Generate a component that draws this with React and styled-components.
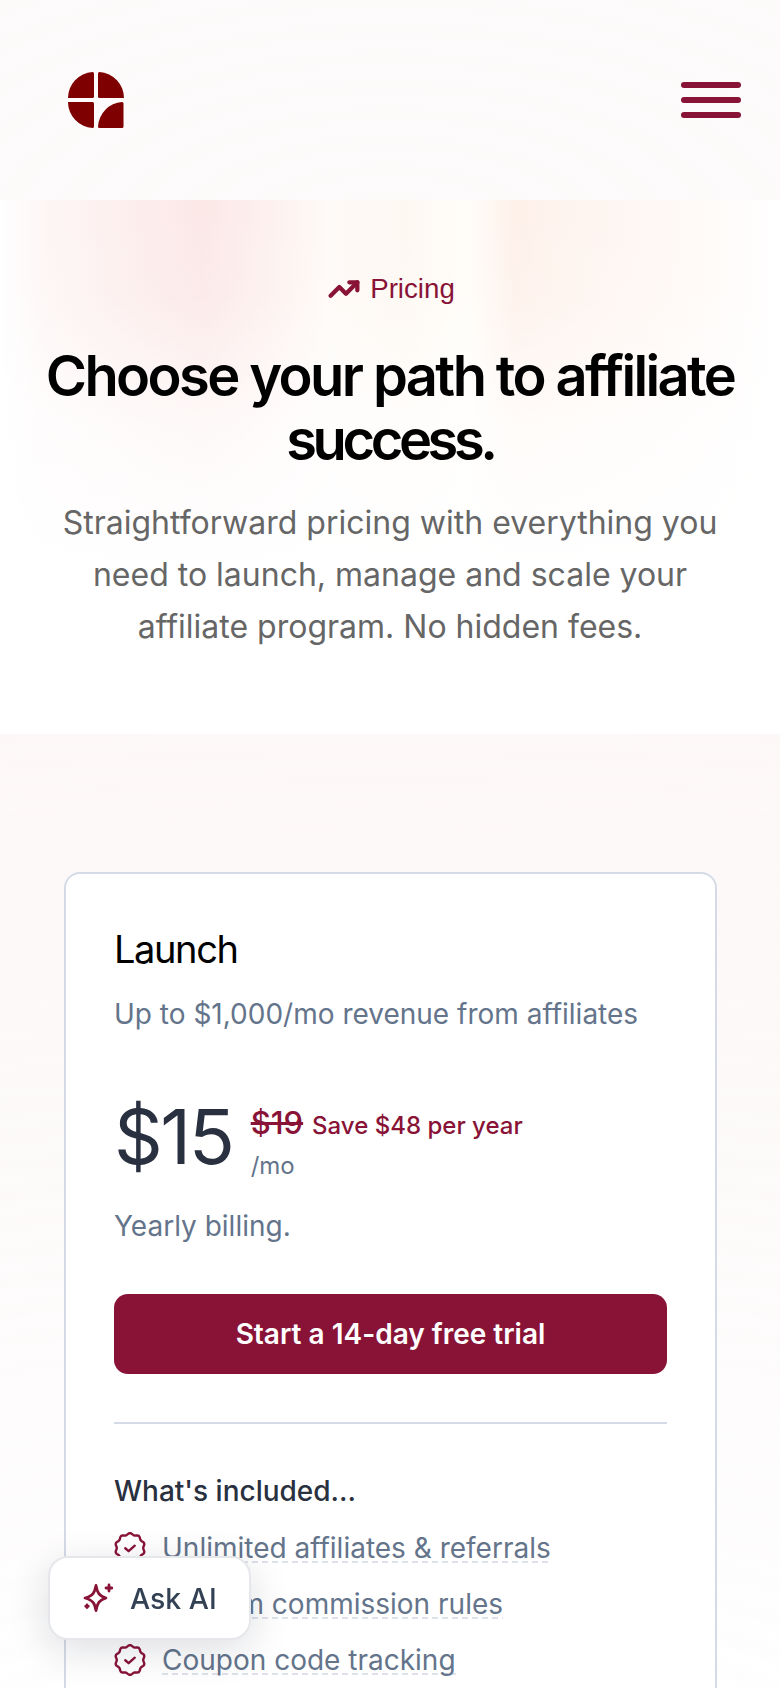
import styled, { createGlobalStyle } from 'styled-components';
import { TrendingUp } from 'lucide-react';

const Global = createGlobalStyle`
  html, body { margin: 0; padding: 0; background: #fff; }
  body { font-family: Inter, "Liberation Sans", sans-serif; }
`;

const Page = styled.div`
  height: 100vh;
  overflow: hidden;
  position: relative;
`;

const waves = `repeating-radial-gradient(ellipse 900px 420px at 50% 120%, rgba(240,225,225,0) 0, rgba(240,225,225,0.05) 30px, rgba(240,225,225,0) 60px)`;

const Nav = styled.header`
  height: 200px;
  box-sizing: border-box;
  display: flex;
  align-items: center;
  justify-content: space-between;
  padding: 0 39px 0 68px;
  background: ${waves}, #fdfbfb;
`;

const Burger = styled.button`
  display: flex;
  flex-direction: column;
  gap: 9px;
  width: 60px;
  padding: 0;
  border: 0;
  background: none;
  & > span {
    display: block;
    height: 6px;
    border-radius: 3px;
    background: #881337;
  }
`;

const Hero = styled.section`
  height: 534px;
  box-sizing: border-box;
  padding-top: 71px;
  text-align: center;
  background:
    linear-gradient(180deg, rgba(255,255,255,0) 0%, rgba(255,255,255,0.1) 18%, rgba(255,255,255,0.72) 42%, #fff 70%),
    linear-gradient(90deg, #fff 0%, #fdf6f5 6%, #fcedec 18%, #fbe8e7 26%, #fdf0ee 34%, #fefaf7 42%, #fef8f2 52%, #fffdf9 60%, #fef1ea 66%, #fef5f0 76%, #fffaf8 90%, #fff 100%);
`;

const Eyebrow = styled.div`
  display: flex;
  align-items: center;
  justify-content: center;
  gap: 10px;
  height: 36px;
  padding-left: 3px;
  font-family: "Liberation Sans", Arial, sans-serif;
  font-size: 27.7px;
  color: #881337;
`;

const Title = styled.h1`
  margin: 37px 0 0;
  font-size: 56px;
  line-height: 64px;
  font-weight: 600;
  letter-spacing: -2.6px;
  color: #000;
`;

const TightWord = styled.span`
  letter-spacing: -4.4px;
`;

const Lead = styled.p`
  margin: 25px auto 0;
  width: 680px;
  font-size: 32px;
  line-height: 52px;
  color: #666;
`;

const Plans = styled.section`
  padding: 138px 63px 0 64px;
  height: 960px;
  box-sizing: border-box;
  background: ${waves}, linear-gradient(180deg, #fdf9f8 0%, #fdfafa 40%, #fff 100%);
`;

const Card = styled.article`
  box-sizing: border-box;
  height: 1100px;
  padding: 52px 48px 0;
  border: 2px solid #d5dbe6;
  border-radius: 16px;
  background: #fff;
`;

const PlanName = styled.h2`
  margin: 0;
  font-size: 38px;
  line-height: 46px;
  font-weight: 400;
  letter-spacing: -1.4px;
  color: #000;
`;

const Muted = styled.p`
  margin: ${p => p.$top}px 0 0;
  font-size: 28px;
  line-height: 40px;
  color: #64748b;
`;

const PriceRow = styled.div`
  display: flex;
  align-items: center;
  gap: 18px;
  margin-top: 52px;
`;

const Price = styled.div`
  font-size: 76px;
  line-height: 90px;
  letter-spacing: -2.4px;
  color: #293040;
`;

const PriceInfo = styled.div`
  display: flex;
  flex-direction: column;
  margin-top: 18px;
`;

const Old = styled.div`
  display: flex;
  align-items: baseline;
  gap: 9px;
  color: #881337;
  font-size: 24px;
  font-weight: 500;
  line-height: 38px;
  & > s { font-size: 31px; font-weight: 500; }
`;

const Per = styled.div`
  font-size: 24px;
  line-height: 41px;
  color: #64748b;
`;

const Cta = styled.button`
  display: block;
  width: 100%;
  height: 80px;
  margin-top: 48px;
  border: 0;
  border-radius: 14px;
  background: #881337;
  color: #fff;
  font-family: inherit;
  font-size: 28px;
  font-weight: 600;
`;

const Divider = styled.hr`
  margin: 48px 0 0;
  border: 0;
  border-top: 2px solid #d5dbe6;
`;

const Included = styled.h3`
  margin: 47px 0 0;
  font-size: 28px;
  line-height: 40px;
  font-weight: 500;
  color: #293040;
`;

const List = styled.ul`
  list-style: none;
  margin: 9px 0 0;
  padding: 0;
`;

const Item = styled.li`
  display: flex;
  align-items: center;
  gap: 15px;
  height: 56px;
  font-size: 28px;
  color: #64748b;
  & > svg { flex: none; margin-left: -1px; }
  & > span {
    line-height: 29px;
    background: repeating-linear-gradient(90deg, #dde2ea 0 6px, transparent 6px 10px) bottom / 100% 2px no-repeat;
  }
`;

const AskAi = styled.button`
  position: fixed;
  left: 48px;
  top: 1556px;
  display: flex;
  align-items: center;
  gap: 17px;
  box-sizing: border-box;
  width: 203px;
  height: 84px;
  padding: 0 0 0 33px;
  border: 2px solid #e5e7eb;
  border-radius: 20px;
  background: #fff;
  box-shadow: 0 10px 40px rgba(15, 23, 42, 0.14);
  font-family: inherit;
  font-size: 28.4px;
  font-weight: 500;
  white-space: nowrap;
  color: #334155;
  & > svg { flex: none; }
`;

const Logo = () => (
  <svg width="56" height="56" viewBox="0 0 56 56" fill="#7f0000">
    <path d="M26 1.500v23a1.500 1.500 0 0 1-1.500 1.500H0A26 26 0 0 1 24.500 0a1.500 1.500 0 0 1 1.500 1.500z" />
    <path d="M30 1.500v23a1.500 1.500 0 0 0 1.500 1.500H56A26 26 0 0 0 31.500 0 1.500 1.500 0 0 0 30 1.500z" />
    <path d="M26 54.500V31.500A1.500 1.500 0 0 0 24.500 30H0a26 26 0 0 0 24.500 26 1.500 1.500 0 0 0 1.500-1.500z" />
    <path d="M30 54.500A26 26 0 0 1 54 30a1.500 1.500 0 0 1 1.500 1.500V54.500A1.500 1.500 0 0 1 54 56H31.500A1.500 1.500 0 0 1 30 54.500z" />
  </svg>
);

const Spark = () => (
  <svg width="30" height="30" viewBox="0 0 30 30" fill="none" stroke="#881337" strokeWidth="2.8" strokeLinejoin="round" strokeLinecap="round">
    <path d="M13 2.500C14.200 9.500 16 12.800 23 15 16 17.200 14.200 20.500 13 27.500 11.800 20.500 10 17.200 2 15 10 12.800 11.800 9.500 13 2.500Z" />
    <path d="M26 2v6M23 5h6" />
    <path d="M4 22v2.500M2.750 23.250h2.500" />
  </svg>
);

// scalloped badge outline: radius wobbles around the circle
const scallop = Array.from({ length: 120 }, (_, i) => {
  const a = (i / 120) * Math.PI * 2;
  const r = 12.4 + 0.75 * Math.cos(a * 10);
  return `${(15 + r * Math.sin(a)).toFixed(2)} ${(15 - r * Math.cos(a)).toFixed(2)}`;
}).join('L');

const Badge = () => (
  <svg width="34" height="34" viewBox="0 0 30 30" fill="none" stroke="#881337" strokeWidth="2.1" strokeLinejoin="round" strokeLinecap="round">
    <path d={`M${scallop}Z`} />
    <path d="M10.800 15.200l3 2.600 5.400-4.800" />
  </svg>
);

export default function App() {
  return (
    <Page>
      <Global />
      <Nav>
        <Logo />
        <Burger aria-label="Menu"><span /><span /><span /></Burger>
      </Nav>
      <Hero>
        <Eyebrow><TrendingUp size={32} strokeWidth={3.2} />Pricing</Eyebrow>
        <Title>Choose your path to affiliate<br /><TightWord>success.</TightWord></Title>
        <Lead>Straightforward pricing with everything you need to launch, manage and scale your affiliate program. No hidden fees.</Lead>
      </Hero>
      <Plans>
        <Card>
          <PlanName>Launch</PlanName>
          <Muted $top={22}>Up to $1,000/mo revenue from affiliates</Muted>
          <PriceRow>
            <Price>$15</Price>
            <PriceInfo>
              <Old><s>$19</s>Save $48 per year</Old>
              <Per>/mo</Per>
            </PriceInfo>
          </PriceRow>
          <Muted $top={20}>Yearly billing.</Muted>
          <Cta>Start a 14-day free trial</Cta>
          <Divider />
          <Included>What's included...</Included>
          <List>
            <Item><Badge /><span>Unlimited affiliates &amp; referrals</span></Item>
            <Item><Badge /><span>Custom commission rules</span></Item>
            <Item><Badge /><span>Coupon code tracking</span></Item>
          </List>
        </Card>
      </Plans>
      <AskAi><Spark />Ask AI</AskAi>
    </Page>
  );
}
